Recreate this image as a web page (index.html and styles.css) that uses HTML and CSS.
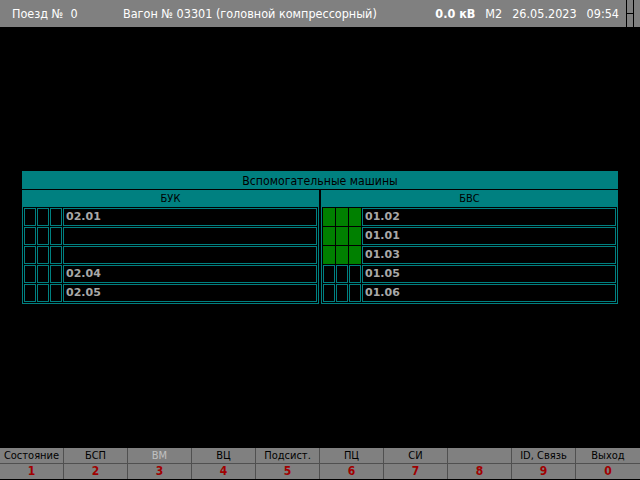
FILE: index.html
```html
<!DOCTYPE html>
<html lang="ru">
<head>
<meta charset="utf-8">
<title>Вспомогательные машины</title>
<link rel="stylesheet" href="styles.css">
</head>
<body>
<div class="screen">
  <header class="topbar">
    <span class="train">Поезд №  0</span>
    <span class="wagon">Вагон № 03301 (головной компрессорный)</span>
    <span class="right">
      <span class="kv">0.0 кВ</span>
      <span>М2</span>
      <span>26.05.2023</span>
      <span>09:54</span>
    </span>
    <span class="ind"></span>
  </header>

  <main class="main">
    <section class="table">
      <div class="title">Вспомогательные машины</div>
      <div class="panels">
        <div class="panel">
          <div class="phead">БУК</div>
          <div class="rows">
            <div class="row"><span class="box"></span><span class="box"></span><span class="box"></span><span class="label">02.01</span></div>
            <div class="row"><span class="box"></span><span class="box"></span><span class="box"></span><span class="label"></span></div>
            <div class="row"><span class="box"></span><span class="box"></span><span class="box"></span><span class="label"></span></div>
            <div class="row"><span class="box"></span><span class="box"></span><span class="box"></span><span class="label">02.04</span></div>
            <div class="row"><span class="box"></span><span class="box"></span><span class="box"></span><span class="label">02.05</span></div>
          </div>
        </div>
        <div class="panel">
          <div class="phead">БВС</div>
          <div class="rows">
            <div class="row"><span class="box on"></span><span class="box on"></span><span class="box on"></span><span class="label">01.02</span></div>
            <div class="row"><span class="box on"></span><span class="box on"></span><span class="box on"></span><span class="label">01.01</span></div>
            <div class="row"><span class="box on"></span><span class="box on"></span><span class="box on"></span><span class="label">01.03</span></div>
            <div class="row"><span class="box"></span><span class="box"></span><span class="box"></span><span class="label">01.05</span></div>
            <div class="row"><span class="box"></span><span class="box"></span><span class="box"></span><span class="label">01.06</span></div>
          </div>
        </div>
      </div>
    </section>
  </main>

  <footer class="fkeys">
    <div class="key"><span class="kname">Состояние</span><span class="knum">1</span></div>
    <div class="key"><span class="kname">БСП</span><span class="knum">2</span></div>
    <div class="key"><span class="kname dis">ВМ</span><span class="knum">3</span></div>
    <div class="key"><span class="kname">ВЦ</span><span class="knum">4</span></div>
    <div class="key"><span class="kname">Подсист.</span><span class="knum">5</span></div>
    <div class="key"><span class="kname">ПЦ</span><span class="knum">6</span></div>
    <div class="key"><span class="kname">СИ</span><span class="knum">7</span></div>
    <div class="key"><span class="kname"></span><span class="knum">8</span></div>
    <div class="key"><span class="kname">ID, Связь</span><span class="knum">9</span></div>
    <div class="key"><span class="kname">Выход</span><span class="knum">0</span></div>
  </footer>
</div>
</body>
</html>
```
FILE: styles.css
```css
* { box-sizing: border-box; }
html, body { margin: 0; padding: 0; background: #000; }
body { font-family: "DejaVu Sans", Verdana, sans-serif; font-size: 11px; }

.screen {
  width: 640px;
  height: 480px;
  display: flex;
  flex-direction: column;
  background: #000;
  overflow: hidden;
}

/* top bar */
.topbar {
  height: 27px;
  flex: none;
  background: #808080;
  color: #fff;
  display: flex;
  align-items: center;
  padding-left: 12px;
  font-family: "DejaVu Sans Condensed", "DejaVu Sans", sans-serif;
  font-size: 12.5px;
}
.train { width: 111px; white-space: pre; }
.wagon { white-space: nowrap; }
.right {
  margin-left: auto;
  display: flex;
  gap: 10px;
  white-space: nowrap;
}
.kv { font-weight: bold; }
.ind {
  position: relative;
  width: 8px;
  height: 27px;
  margin-left: 7px;
  margin-right: 6px;
  border-left: 1px solid #000;
  border-right: 1px solid #000;
}
.ind::after {
  content: "";
  position: absolute;
  left: 0;
  right: 0;
  top: 13px;
  height: 1px;
  background: #000;
}

/* main */
.main {
  flex: 1;
  padding: 144px 0 0 22px;
}
.table { width: 596px; }
.title {
  height: 18px;
  line-height: 20px;
  background: #008080;
  color: #000;
  text-align: center;
  font-family: "DejaVu Sans Condensed", "DejaVu Sans", sans-serif;
  font-size: 12.2px;
  margin-bottom: 1px;
  overflow: hidden;
}
.panels {
  display: flex;
  gap: 2px;
}
.panel {
  width: 297px;
  border: 1px solid #008080;
}
.phead {
  height: 16px;
  line-height: 16px;
  background: #008080;
  color: #000;
  text-align: center;
  font-family: "DejaVu Sans Condensed", "DejaVu Sans", sans-serif;
  font-size: 11px;
}
.rows {
  padding: 1px;
  display: flex;
  flex-direction: column;
  gap: 1px;
}
.row {
  height: 18px;
  display: flex;
  gap: 1px;
}
.box {
  width: 12px;
  flex: none;
  border: 1px solid #008080;
}
.box.on {
  background: #008000;
  border-color: #008000;
}
.label {
  flex: 1;
  border: 1px solid #008080;
  padding-left: 2px;
  line-height: 16px;
  color: #a8a8a8;
  font-weight: bold;
  font-size: 11px;
}

/* footer keys */
.fkeys {
  flex: none;
  height: 31px;
  margin-bottom: 1px;
  display: grid;
  grid-template-columns: repeat(10, 64px);
  background: #808080;
  font-family: "DejaVu Sans Condensed", "DejaVu Sans", sans-serif;
}
.key {
  display: flex;
  flex-direction: column;
  border-right: 1px solid #505050;
}
.key:last-child { border-right: none; }
.kname {
  height: 16px;
  line-height: 15px;
  border-bottom: 1px solid #505050;
  text-align: center;
  color: #000;
  font-size: 11px;
  white-space: nowrap;
}
.kname.dis { color: #c0c0c0; }
.knum {
  height: 15px;
  line-height: 15px;
  text-align: center;
  color: #a00000;
  font-weight: bold;
  font-size: 12px;
}
```
